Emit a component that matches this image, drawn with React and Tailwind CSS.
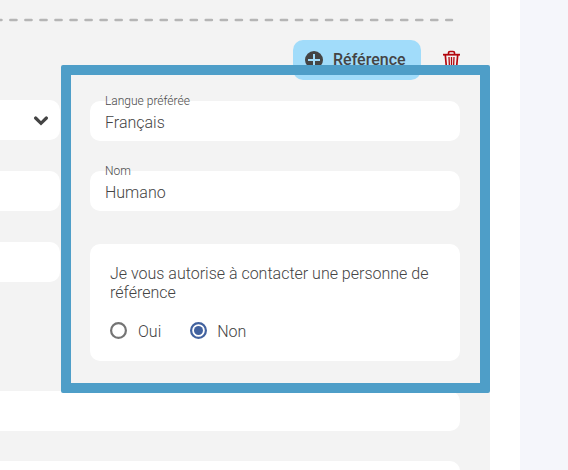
import clsx from "clsx";

function Field({ label, value }) {
  return (
    <div className="relative h-10 rounded-[10px] bg-white px-[15px] pt-[12px]">
      <span className="absolute -top-[7px] left-[15px] text-[12px] leading-[14px] text-[#4a4a4a]">{label}</span>
      <div className="text-[16px] leading-[20px]">{value}</div>
    </div>
  );
}

function Radio({ label, checked }) {
  return (
    <label className="flex items-start">
      <svg className={clsx("mt-px size-[17px]", checked ? "text-[#42629f]" : "text-[#747474]")} viewBox="0 0 17 17">
        <circle cx="8.5" cy="8.5" r="7.4" fill="none" stroke="currentColor" strokeWidth="2.2" />
        {checked && <circle cx="8.5" cy="8.5" r="4.5" fill="currentColor" />}
      </svg>
      <span className={clsx("pt-[2px] text-[16px] leading-[18px]", checked ? "ml-[10px]" : "ml-[11px]")}>{label}</span>
    </label>
  );
}

function PlusIcon() {
  return (
    <svg className="size-[18px]" viewBox="0 0 18 18" fill="none">
      <circle cx="9" cy="9" r="9" fill="#444" />
      <path d="M9 3v12M3 9h12" stroke="#a1dcfa" strokeWidth="2" />
    </svg>
  );
}

function TrashIcon() {
  return (
    <svg className="h-[19px] w-[17px]" viewBox="0 0 17 19" fill="none" stroke="#b3060c">
      <path d="M0 4.7h17" strokeWidth="1.8" />
      <path d="M5.5 4V2.7Q5.5 1.5 7 1.5h3q1.5 0 1.5 1.2V4" strokeWidth="1.6" />
      <path d="M2.3 5l1.2 13h10l1.2-13" strokeWidth="1.7" />
      <path d="M6 7l.4 9M8.5 7v9M11 7l-.4 9" strokeWidth="1.3" />
    </svg>
  );
}

export default function App() {
  return (
    <div className="relative flex h-[470px] w-[568px] overflow-hidden bg-[#f5f6fb] font-['Roboto',sans-serif] font-light text-[#444]">
      <main className="w-[520px] shrink-0 bg-white pr-[30px]">
        <div className="h-full overflow-hidden bg-[#f3f3f3] pr-[30px]">
          <svg className="mt-[18px] block h-1 w-full" viewBox="0 0 460 4">
            <path d="M-4.7 2H452" stroke="#b5b5b5" strokeWidth="2.5" strokeLinecap="round" strokeDasharray="6.2 8.83" />
          </svg>

          <div className="mt-[18px] flex h-10 justify-end">
            <button className="flex w-32 items-center rounded-[10px] bg-[#a1dcfa] pl-3 text-[16px] font-medium text-[#444]">
              <PlusIcon />
              <span className="ml-[10px] whitespace-nowrap">Référence</span>
            </button>
            <button className="ml-[22px] w-[17px] pb-px">
              <TrashIcon />
            </button>
          </div>

          <div className="mt-5 flex h-[291px] gap-[30px]">
            <div className="w-[60px] shrink-0">
              <div className="flex h-10 items-center justify-end rounded-r-[10px] bg-white pr-[11px] pt-[2px]">
                <svg className="h-[10px] w-[16px]" viewBox="0 0 16 10" fill="none">
                  <path d="M2.6 2L8 7.3 13.4 2" stroke="#444" strokeWidth="3.2" strokeLinecap="round" />
                </svg>
              </div>
              <div className="mt-[31px] h-10 rounded-r-[10px] bg-white" />
              <div className="mt-[31px] h-10 rounded-r-[10px] bg-white" />
            </div>

            <div className="w-[370px] pt-px">
              <Field label="Langue préférée" value="Français" />
              <div className="mt-[30px]">
                <Field label="Nom" value="Humano" />
              </div>
              <div className="mt-[33px] h-[117px] rounded-[10px] bg-white px-5 pt-5">
                <p className="text-[16px] leading-[19px]">
                  Je vous autorise à contacter une personne de référence
                </p>
                <div className="mt-[19px] flex gap-[29px]">
                  <Radio label="Oui" />
                  <Radio label="Non" checked />
                </div>
              </div>
            </div>
          </div>

          <div className="h-10 rounded-r-[10px] bg-white" />
          <div className="mt-[30px] h-10 rounded-r-[10px] bg-white" />
        </div>
      </main>

      <div className="absolute left-[61px] top-[65px] h-[328px] w-[429px] rounded-[2px] border-10 border-[#4e9ec8]" />
    </div>
  );
}
